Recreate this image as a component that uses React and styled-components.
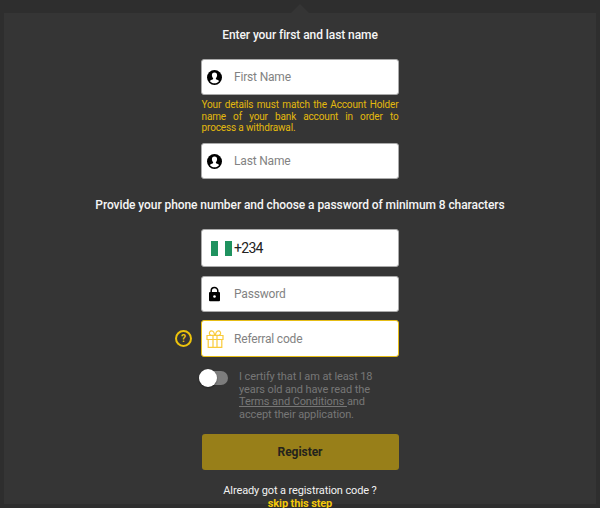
/* eslint-disable react/prop-types */
import React from 'react';
import styled, { createGlobalStyle } from 'styled-components';

const GlobalStyle = createGlobalStyle`
* { box-sizing:border-box; }
body {
  margin:0;
  background:#2e2e2e;
  font-family:Roboto, "Liberation Sans", sans-serif;
  overflow:hidden;
}
`;
const Page = styled.div`
height:508px;
padding:13px 4px 4px;
`;
const Panel = styled.main`
position:relative;
height:491px;
display:flex;
flex-direction:column;
align-items:center;
background:#353535;
`;
const Arrow = styled.div`
position:absolute;
top:-9px;
left:287px;
border-left:9px solid transparent;
border-right:9px solid transparent;
border-bottom:9px solid #353535;
`;
const Title = styled.h2`
margin:${({ $top }) => $top}px 0 0;
height:14px;
line-height:14px;
font-size:12px;
font-weight:500;
letter-spacing:-.08px;
white-space:nowrap;
color:#f5f5f5;
`;
const Field = styled.label`
flex:none;
display:flex;
align-items:center;
width:198px;
height:${({ $height }) => $height || 37}px;
margin-top:${({ $top }) => $top}px;
padding-left:${({ $pad }) => $pad || 6}px;
background:#fff;
border:1px solid ${({ $accent }) => ($accent ? '#e6bd16' : '#aaa')};
border-radius:3px;
`;
const Input = styled.input`
flex:1;
min-width:0;
margin-left:${({ $gap }) => $gap}px;
padding:0;
border:none;
outline:none;
background:none;
color:#222;
font:${({ $size }) => $size || 12}px Roboto, sans-serif;
letter-spacing:${({ $size }) => ($size ? -0.7 : -0.18)}px;
&::placeholder { color:#828282; opacity:1; }
`;
const Hint = styled.p`
width:197px;
margin:4px 0 0;
font-size:10px;
line-height:11.7px;
letter-spacing:-.14px;
text-align:justify;
color:#e3b90d;
`;
const Flag = styled.span`
width:21px;
height:15px;
background:linear-gradient(90deg, #1f925f 7px, #fff 7px 14px, #1f925f 14px);
`;
const ReferralRow = styled.div`
display:flex;
align-items:center;
gap:9px;
width:224px;
margin:8px 26px 0 0;
`;
const Help = styled.span`
flex:none;
display:flex;
align-items:center;
justify-content:center;
width:17px;
height:17px;
border:2px solid #edc30c;
border-radius:50%;
color:#edc30c;
font-size:10px;
font-weight:700;
`;
const Terms = styled.div`
display:flex;
gap:11px;
width:202px;
height:50px;
margin-top:14px;
`;
const Switch = styled.button`
display:flex;
align-items:center;
width:29px;
height:14px;
padding:0;
border:none;
border-radius:7px;
background:#7d7d7d;
`;
const Knob = styled.span`
flex:none;
width:18px;
height:18px;
border-radius:50%;
background:#fff;
box-shadow:0 1px 2px rgba(0,0,0,.4);
`;
const TermsText = styled.p`
margin:0;
font-size:11px;
line-height:12.5px;
letter-spacing:-.1px;
color:#777;
white-space:nowrap;
`;
const Register = styled.button`
flex:none;
width:197px;
height:36px;
margin-top:13px;
padding:0;
border:none;
border-radius:3px;
background:#987f19;
color:#24231c;
font:700 12px Roboto, sans-serif;
letter-spacing:-.05px;
`;
const Footer = styled.div`
margin-top:15px;
text-align:center;
font-size:11px;
line-height:12.5px;
letter-spacing:-.12px;
color:#f2f2f2;
white-space:nowrap;
`;
const Skip = styled.div`
font-weight:700;
color:#f3c80a;
`;

function UserIcon() {
  return (
    <svg width="15" height="15" viewBox="0 0 15 15">
      <circle cx="7.5" cy="7.5" r="7.5" fill="#000" />
      <path d="M7.5 2.5c-1.8 0-2.7 1.2-2.6 2.9.1 1.2.6 2.1 1.2 2.6v1.1c-.4.7-2.2.8-3.2 1.9 1.1 1.4 2.7 2.3 4.6 2.3s3.5-.9 4.6-2.3c-1-1.1-2.8-1.2-3.2-1.9V8c.6-.5 1.1-1.4 1.2-2.6.1-1.7-.8-2.9-2.6-2.9z" fill="#fff" />
    </svg>
  );
}

function LockIcon() {
  return (
    <svg width="15" height="16" viewBox="0 0 15 16">
      <path d="M4.2 7V4.8a3.3 3.3 0 0 1 6.6 0V7" fill="none" stroke="#000" strokeWidth="1.5" />
      <rect x="2" y="6" width="11" height="9.3" rx="1" fill="#000" />
      <circle cx="7.5" cy="10.5" r="1.3" fill="#fff" />
    </svg>
  );
}

function GiftIcon() {
  return (
    <svg width="18" height="18" viewBox="0 0 18 18" fill="none" stroke="#f9cb3a" strokeWidth="1.2">
      <path d="M1 5.5h16v4H1zM2.2 9.5h13.6v7.8H2.2zM7 5.5h4v11.8H7z" />
      <path d="M8.6 5.3H5C3.4 4.9 3 3.3 3.7 2c.9-1.6 3-1.4 3.9 0 .6 1 .9 2 1 3.3zM9.4 5.3H13c1.6-.4 2-2 1.3-3.3-.9-1.6-3-1.4-3.9 0-.6 1-.9 2-1 3.3z" />
    </svg>
  );
}

function App() {
  return (
    <Page>
      <GlobalStyle />
      <Panel>
        <Arrow />
        <Title $top={15}>Enter your first and last name</Title>
        <Field $top={17} $height={36} $pad={5}>
          <UserIcon />
          <Input $gap={12} placeholder="First Name" />
        </Field>
        <Hint>
          Your details must match the Account Holder name of your bank account in order to
          process a withdrawal.
        </Hint>
        <Field $top={9} $height={36} $pad={5}>
          <UserIcon />
          <Input $gap={12} placeholder="Last Name" />
        </Field>
        <Title $top={19}>
          Provide your phone number and choose a password of minimum 8 characters
        </Title>
        <Field $top={17} $height={38} $pad={9}>
          <Flag />
          <Input $gap={2} $size={14} defaultValue="+234" />
        </Field>
        <Field $top={9} $height={36} $pad={5}>
          <LockIcon />
          <Input $gap={12} type="password" placeholder="Password" />
        </Field>
        <ReferralRow>
          <Help>?</Help>
          <Field $top={0} $pad={4} $accent>
            <GiftIcon />
            <Input $gap={10} placeholder="Referral code" />
          </Field>
        </ReferralRow>
        <Terms>
          <Switch><Knob /></Switch>
          <TermsText>
            I certify that I am at least 18
            <br />
            years old and have read the
            <br />
            <u>Terms and Conditions </u>
            and
            <br />
            accept their application.
          </TermsText>
        </Terms>
        <Register>Register</Register>
        <Footer>
          Already got a registration code ?
          <Skip>skip this step</Skip>
        </Footer>
      </Panel>
    </Page>
  );
}

export default App;
